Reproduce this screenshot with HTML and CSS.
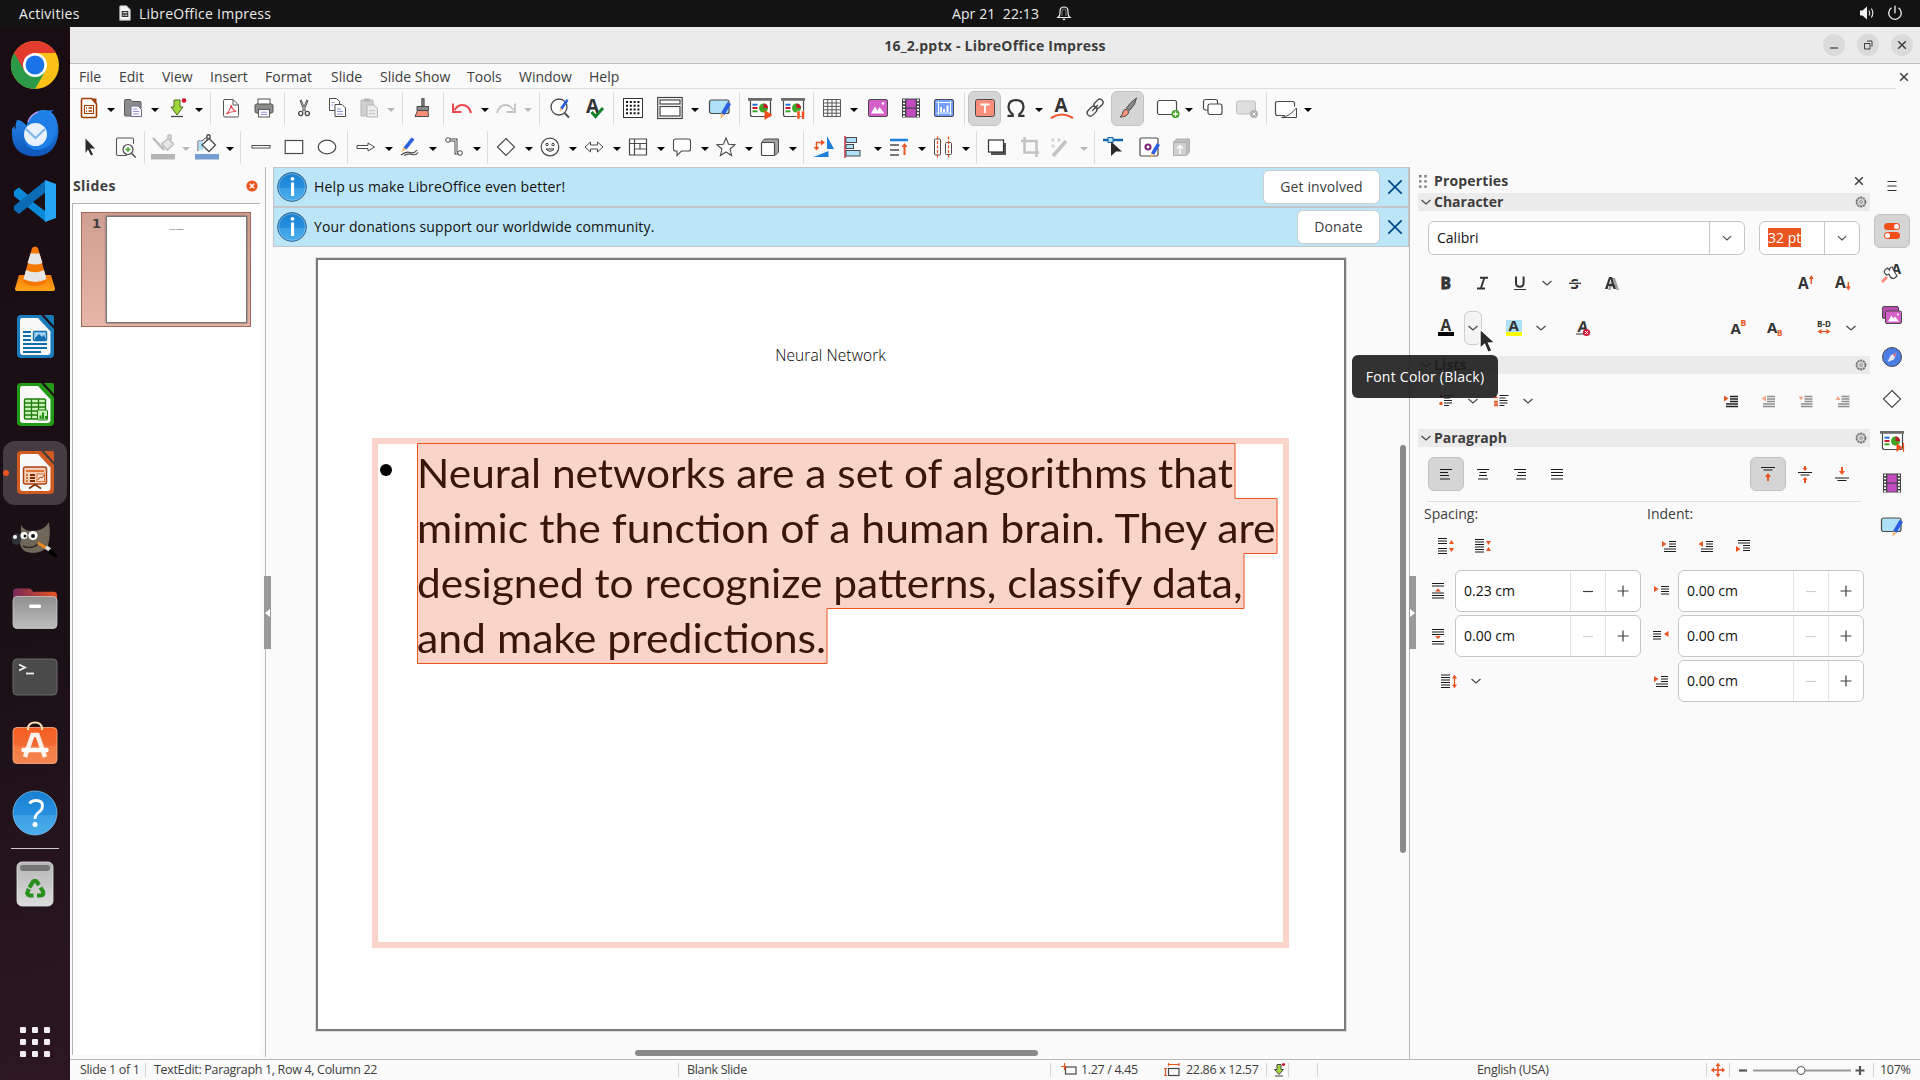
FILE: index.html
```html
<!DOCTYPE html>
<html lang="en">
<head>
<meta charset="utf-8">
<title>16_2.pptx - LibreOffice Impress</title>
<link rel="stylesheet" href="styles.css">
</head>
<body>
<svg class="defs" aria-hidden="true">
  <defs>
    <linearGradient id="gBlue" x1="0" y1="0" x2="0" y2="1"><stop offset="0" stop-color="#1a7fd0"/><stop offset=".54" stop-color="#2590e0"/><stop offset=".55" stop-color="#3c9fe4"/><stop offset="1" stop-color="#4aaeec"/></linearGradient>
    <linearGradient id="gOrange" x1="0" y1="0" x2="0" y2="1"><stop offset="0" stop-color="#f55d22"/><stop offset=".5" stop-color="#f36b33"/><stop offset=".51" stop-color="#f57a43"/><stop offset="1" stop-color="#f58650"/></linearGradient>
    <linearGradient id="gGray" x1="0" y1="0" x2="0" y2="1"><stop offset="0" stop-color="#8f8f8f"/><stop offset="1" stop-color="#bdbdbd"/></linearGradient>
    <linearGradient id="gTrash" x1="0" y1="0" x2="0" y2="1"><stop offset="0" stop-color="#b5b5b5"/><stop offset="1" stop-color="#dcdcdc"/></linearGradient>
    <linearGradient id="gFolder" x1="0" y1="0" x2="1" y2="0"><stop offset="0" stop-color="#77275a"/><stop offset="1" stop-color="#e95420"/></linearGradient>
    <linearGradient id="gCone" x1="0" y1="0" x2="0" y2="1"><stop offset="0" stop-color="#f57900"/><stop offset="1" stop-color="#ffa51c"/></linearGradient>
    <linearGradient id="gBird" x1="0" y1="0" x2="0" y2="1"><stop offset="0" stop-color="#2a8df0"/><stop offset="1" stop-color="#0f55b8"/></linearGradient>
  </defs>
  <symbol id="chev" viewBox="0 0 24 24"><path d="M7.500 10l4.500 4 4.500-4" fill="none" stroke="#4a4a4a" stroke-width="1.300"/></symbol>
  <symbol id="gear" viewBox="0 0 12 12"><circle cx="6" cy="6" r="4.600" fill="#e0e0e0" stroke="#6e6e6e" stroke-width="1.600" stroke-dasharray="2.200 .7"/><circle cx="6" cy="6" r="3.800" fill="#dadada" stroke="#8a8a8a" stroke-width=".7"/><circle cx="6" cy="6" r="1.300" fill="#fafafa" stroke="#6e6e6e" stroke-width=".8"/></symbol>
  <symbol id="minus" viewBox="0 0 24 24"><path d="M7 12.500h10" stroke="currentColor" stroke-width="1.200"/></symbol>
  <symbol id="plus" viewBox="0 0 24 24"><path d="M6.500 12h11M12 6.500v11" stroke="currentColor" stroke-width="1.200"/></symbol>
  <symbol id="cross" viewBox="0 0 12 12"><path d="M2.200 2.200l7.600 7.600M9.800 2.200l-7.600 7.600" stroke="currentColor" stroke-width="1.500"/></symbol>
  <symbol id="info" viewBox="0 0 30 30"><circle cx="15" cy="15" r="14.400" fill="url(#gBlue)" stroke="#35658c" stroke-width="1"/><circle cx="15" cy="15" r="13.300" fill="none" stroke="#8cc7f2" stroke-width=".6"/><circle cx="15.500" cy="6.800" r="1.900" fill="#fff"/><rect x="14" y="10.500" width="3.100" height="13.500" fill="#fff"/></symbol>
  <symbol id="film" viewBox="0 0 24 24"><rect x="3" y="2.500" width="18" height="19" fill="#454545"/><rect x="7.300" y="3.500" width="9.400" height="8" fill="#c24bc0"/><rect x="7.300" y="12.700" width="9.400" height="8" fill="#c24bc0"/><path d="M5 3.500v18M19 3.500v18" stroke="#fff" stroke-width="2" stroke-dasharray="1.600 1.600"/></symbol>
  <symbol id="present" viewBox="0 0 24 24"><path d="M2.500 4.500v14q0 2 2 2H21q1.500 0 1.500-2v-14" fill="#fff" stroke="#4a4a4a" stroke-width="1.200"/><rect x="0" y="2" width="24" height="2.800" fill="#6b6b6b"/><path d="M4.500 8.700h5" stroke="#1c71d8" stroke-width="2"/><path d="M4.500 12h5" stroke="#c9132b" stroke-width="2"/><path d="M4.500 15.300h5" stroke="#3fa524" stroke-width="2"/><circle cx="15.500" cy="12" r="4.500" fill="#3fa524"/><path d="M15.500 12V7.500a4.500 4.500 0 0 1 4.500 4.500z" fill="#c9132b"/></symbol>
  <symbol id="master" viewBox="0 0 24 24"><rect x="1.500" y="4" width="19.500" height="13.500" rx="2" fill="#aee1f7" stroke="#4a4a4a" stroke-width="1.200"/><path d="M19.500 6l3.500 2-6.500 11-3.500-2z" fill="#2b5fe0"/><path d="M13 17l3.500 2-4 4z" fill="#f5b971"/></symbol>
  <symbol id="doc" viewBox="0 0 48 48"><path d="M10 2h20l13 14v25q0 4-4 4H10q-4 0-4-4V6q0-4 4-4z" fill="currentColor"/><path d="M11 5h16l12.500 13.500V39q0 3-3 3H12q-3 0-3-3V8q0-3 2-3z" fill="#f8f8f8"/><path d="M33 2h8q2 0 2 2v9z" fill="currentColor"/></symbol>
</svg>

<header class="topbar">
  <span class="tb-activities">Activities</span>
  <svg class="tb-app" viewBox="0 0 12 16"><path d="M1.500.7h6l3.800 4v10.600H.7V1.500q0-.8.800-.8z" fill="#f4f4f4" stroke="#9a9a9a"/><rect x="2.700" y="6" width="6.600" height="6" fill="#333"/><path d="M3.800 7.700h4.400M3.800 10.200h1.500M6 10.200h2.200" stroke="#f4f4f4"/></svg>
  <span class="tb-name">LibreOffice Impress</span>
  <span class="tb-clock">Apr 21&nbsp; 22:13</span>
  <svg class="tb-bell" viewBox="0 0 14 16"><path d="M1 12.500q2-1.500 2-4.500V6q0-4 4-4t4 4v2q0 3 2 4.500z" fill="none" stroke="#eee" stroke-width="1.200"/><path d="M5 11V6.500Q5 4 7 4t2 2.500V11" fill="none" stroke="#999" stroke-width=".8"/><path d="M5 13.800h4L7 15.500z" fill="#eee"/></svg>
  <svg class="tb-vol" viewBox="0 0 16 16"><path d="M1 5.500h2.500L8 1.500v13L3.500 10.500H1z" fill="#f2f2f2"/><path d="M10 5.500q1.600 2.500 0 5M12.300 3.500q3 4.500 0 9" fill="none" stroke="#e0e0e0" stroke-width="1.200"/></svg>
  <svg class="tb-pow" viewBox="0 0 16 16"><path d="M4.500 2.800a6.300 6.300 0 1 0 7 0M8 .8v7.500" fill="none" stroke="#f2f2f2" stroke-width="1.300"/></svg>
</header>

<div class="desktop">
<nav class="dock">
  <div class="app"><svg viewBox="0 0 48 48"><circle cx="24" cy="24" r="24" fill="#fbc116"/><path d="M24 24L3.200 12A24 24 0 0 0 24 48l10.400-18z" fill="#2a9a48"/><path d="M3.200 12A24 24 0 0 1 44.800 12H24L13.600 30z" fill="#e33b2e"/><circle cx="24" cy="24" r="12" fill="#fff"/><circle cx="24" cy="24" r="9.400" fill="#1a73e8"/></svg></div>
  <div class="app"><svg viewBox="0 0 48 48"><path d="M1 20Q-1 46 23 47.500 46 47 47.500 22 47 8 40 3q-3-2.500-9-2-8 1-12 9l-3 7Q10 10 6 11q-2 4-1 10l-2-4z" fill="url(#gBird)"/><path d="M16 15q5-13 18-13l9-1-6 4q11 9 7 22-5 14-20 14-10-2-11-13z" fill="#1f7fe8"/><circle cx="24.500" cy="25.500" r="11.500" fill="#e9f2fc"/><path d="M15 20l9.500 9 9.500-9" fill="none" stroke="#7db4ea" stroke-width="2"/><path d="M17 13q3-8 10-10" stroke="#b99cf0" stroke-width="1.500" fill="none"/></svg></div>
  <div class="app"><svg viewBox="0 0 48 48"><path d="M3 14l5-3.500L35 33v12L3 19z" fill="#0a8ad8"/><path d="M3 33l5 4L35 15V3L3 29z" fill="#0a6cb4"/><path d="M34 3l11 4v34l-11 4z" fill="#27a5f5"/><path d="M34 16L22 25l12 9z" fill="#1c1015"/></svg></div>
  <div class="app"><svg viewBox="0 0 48 48"><path d="M8 30h32l4 13.500q0 2.500-2 2.500H6q-2 0-2-2.500z" fill="url(#gCone)"/><path d="M21 3q3-3 6 0l9 33q-3 5-12 5t-12-5z" fill="#f57900"/><path d="M19.500 8.500h9l3 9.500q-7 3-15 0zM15 25q9 4.500 18 0l2.500 9q-11 6-23 0z" fill="#e6e6e6"/></svg></div>
  <div class="app writer"><svg viewBox="0 0 48 48"><use href="#doc"/><path d="M12 19h8M12 23h8M12 27h8M12 31h24M12 35h24M12 39h18" stroke="#0f6fae" stroke-width="2.200"/><rect x="22.500" y="18.500" width="13" height="9" rx="1" fill="#9fd0f0" stroke="#0f6fae" stroke-width="1.400"/><path d="M24 27v-2l4-4 3 3 2-2 2 5z" fill="#0f6fae"/></svg></div>
  <div class="app calc"><svg viewBox="0 0 48 48"><use href="#doc"/><rect x="13.500" y="18" width="21" height="20" rx="1" fill="#c9f3b6" stroke="#1e7c0e" stroke-width="1.400"/><path d="M13 22h22M13 26h22M13 30h22M13 34h22M20.500 18v20M27.500 18v20" stroke="#1e7c0e" stroke-width="1.300"/><rect x="26.500" y="29" width="10" height="10" rx="1" fill="#c9f3b6" stroke="#1e7c0e"/><path d="M28.500 38v-3.500h2V38zM31 38v-6.500h2V38zM34 38v-3h2v3z" fill="#1e9010"/></svg></div>
  <div class="app impress active"><i class="running"></i><svg viewBox="0 0 48 48"><use href="#doc"/><rect x="12.500" y="18" width="23" height="17" rx="2" fill="#f6cdb8" stroke="#a84313" stroke-width="1.500"/><path d="M15 22h18" stroke="#e07232" stroke-width="2"/><path d="M15 26h2M15 29h2M15 32h2" stroke="#e07232" stroke-width="2"/><path d="M19 26h5M19 29h5M19 32h5" stroke="#7c2d05" stroke-width="2"/><rect x="26" y="25" width="7.500" height="7.500" fill="#fbe6db" stroke="#e07232"/><path d="M27 31l2-3 2 1 2-3" stroke="#a84313" fill="none"/><path d="M18 39.500l6-4 6 4" fill="none" stroke="#7c2d05" stroke-width="1.600"/></svg></div>
  <div class="app"><svg viewBox="0 0 48 48"><path d="M10 8q3 6 11 6 12 0 17-9 2 14-1 23-4 8-16 8Q9 35 9 25q1-8 1-17z" fill="#6f6759"/><ellipse cx="5.500" cy="22" rx="4.600" ry="6" fill="#2e3338"/><circle cx="4" cy="20" r="2" fill="#fff"/><circle cx="22" cy="18.500" r="4.600" fill="#fff"/><circle cx="13" cy="18.500" r="3.500" fill="#fff"/><circle cx="22" cy="19" r="2" fill="#111"/><circle cx="14" cy="19" r="1.500" fill="#111"/><path d="M12 29q8 4 15-2" fill="none" stroke="#2b2620" stroke-width="1.500"/><path d="M27 26l10 6" stroke="#e88b1c" stroke-width="3"/><path d="M35 30l4 3" stroke="#ddd" stroke-width="4"/><path d="M39 32q6 3 8 9-7-1-10-6z" fill="#000"/></svg></div>
  <div class="app"><svg viewBox="0 0 48 48"><path d="M2 14V7q0-3.500 3.500-3.500H18q2 0 3 2t3 1.300h18.500Q46 7 46 10v8H2z" fill="url(#gFolder)"/><rect x="2" y="11.500" width="44" height="32" rx="4" fill="url(#gGray)" stroke="#c9c9c9" stroke-width=".8"/><rect x="18" y="19.500" width="12" height="3.500" rx="1.500" fill="#fff"/></svg></div>
  <div class="app"><svg viewBox="0 0 48 48"><rect x="2" y="6" width="44" height="36" rx="4" fill="#4a4a4a" stroke="#6a6a6a"/><path d="M8 11.500l6 3-6 3" fill="none" stroke="#f0f0f0" stroke-width="1.800"/><path d="M15 20.500h8" stroke="#f0f0f0" stroke-width="1.800"/></svg></div>
  <div class="app"><svg viewBox="0 0 48 48"><rect x="2" y="6.500" width="44" height="36" rx="4" fill="url(#gOrange)" stroke="#ffb18c" stroke-width=".8"/><path d="M17 9V8q0-6.500 7-6.500t7 6.500v1" fill="none" stroke="#fbe0b4" stroke-width="2"/><path d="M14 36l7.500-22h5L34 36" fill="none" stroke="#fdf0ea" stroke-width="4.500"/><path d="M12.500 29h23" stroke="#fff" stroke-width="4.500" stroke-linecap="round"/></svg></div>
  <div class="app"><svg viewBox="0 0 48 48"><circle cx="24" cy="24" r="22" fill="url(#gBlue)" stroke="#7cc1f0" stroke-width=".8"/><path d="M18.500 14.500Q20.500 11.500 25 11.500q6.500 0 6.500 5.500 0 3.500-3.500 6-4 3-4 7" fill="none" stroke="#fff" stroke-width="2.800"/><circle cx="24" cy="35.500" r="2.500" fill="#fff"/></svg></div>
  <hr class="dock-line">
  <div class="app"><svg viewBox="0 0 48 48"><rect x="6" y="2" width="36" height="44" rx="5" fill="url(#gTrash)" stroke="#e6e6e6" stroke-width=".8"/><rect x="9" y="5" width="30" height="6" rx="3" fill="#767676"/><g fill="none" stroke="#26901c" stroke-width="4.200"><path d="M18.500 27.500l3.300-5.500q2.200-2.500 4.200 0l2 3"/><path d="M29.500 27.500l2.500 4q1 3.500-2 4h-4"/><path d="M22.500 35.500H19q-4-1-2-4.500l1-2"/></g></svg></div>
  <svg class="grid-apps" viewBox="0 0 30 30"><g fill="#f2eff0"><rect width="6" height="6" rx="1"/><rect x="12" width="6" height="6" rx="1"/><rect x="24" width="6" height="6" rx="1"/><rect y="12" width="6" height="6" rx="1"/><rect x="12" y="12" width="6" height="6" rx="1"/><rect x="24" y="12" width="6" height="6" rx="1"/><rect y="24" width="6" height="6" rx="1"/><rect x="12" y="24" width="6" height="6" rx="1"/><rect x="24" y="24" width="6" height="6" rx="1"/></g></svg>
</nav>

<main class="window">
  <div class="titlebar">
    <h1>16_2.pptx - LibreOffice Impress</h1>
    <div class="winbtns">
      <b><svg viewBox="0 0 22 22"><path d="M7 14h8" stroke="#3d3d3d" stroke-width="1.200"/></svg></b>
      <b><svg viewBox="0 0 22 22"><path d="M7.500 9.500h5.500V15H7.500zM10 7h5v5.500" fill="none" stroke="#3d3d3d"/></svg></b>
      <b><svg viewBox="0 0 22 22"><path d="M7.200 7.200l7.600 7.600M14.800 7.200l-7.600 7.600" stroke="#3d3d3d" stroke-width="1.500"/></svg></b>
    </div>
  </div>
  <div class="menubar">
    <span>File</span><span>Edit</span><span>View</span><span>Insert</span><span>Format</span><span>Slide</span><span>Slide Show</span><span>Tools</span><span>Window</span><span>Help</span>
    <svg class="docclose" viewBox="0 0 12 12"><use href="#cross"/></svg>
  </div>

  <div class="toolbar standard">
    <svg viewBox="0 0 24 24"><path d="M6 2.500h8.500L19.500 8v12q0 1.500-1.500 1.500H6q-1.500 0-1.500-1.500V4Q4.500 2.500 6 2.500z" fill="#fff" stroke="#a33e03" stroke-width="1.600"/><path d="M14.500 2.500h5V8z" fill="#a33e03"/><rect x="7.500" y="9.500" width="9" height="8" fill="#fff" stroke="#a33e03" stroke-width="1.100"/><path d="M9 12h1M11.500 12H15M9 15h1M11.500 15H15" stroke="#a33e03" stroke-width="1.300"/></svg>
    <i class="dd"></i>
    <svg viewBox="0 0 24 24"><path d="M3.500 19V4.500q0-1 1-1h5l1.500 2h8q1 0 1 1V19q0 1-1 1H4.500q-1 0-1-1z" fill="#8b8b8b" stroke="#5b5b5b"/><path d="M10 10h7l3.500 3.500v7H10z" fill="#fff" stroke="#6b6b8b"/><path d="M12 13h4M12 15.500h6M12 18h6" stroke="#8f91e0"/></svg>
    <i class="dd"></i>
    <svg viewBox="0 0 24 24"><path d="M9 4h6v7h3l-6 8-6-8h3z" fill="#a3d53f" stroke="#4c6b1c"/><path d="M6 20.500h12" stroke="#444" stroke-width="1.300"/><circle cx="19" cy="4.500" r="2.300" fill="#d4122c"/></svg>
    <i class="dd"></i><i class="sep"></i>
    <svg viewBox="0 0 24 24"><path d="M5 3.500h9L19.500 9v10.500q0 1.500-1.500 1.500H6q-1.500 0-1.500-1.500V5z" fill="#fff" stroke="#555"/><path d="M14 3.500V9h5.500" fill="none" stroke="#555"/><path d="M7.500 18q4-4 4.500-9 1.500 5 5 6.500-5-.5-9.500 2.500z" fill="none" stroke="#ec4050" stroke-width="1.100"/></svg>
    <svg viewBox="0 0 24 24"><rect x="6" y="3" width="12" height="6" fill="#fff" stroke="#555"/><rect x="3" y="8" width="18" height="9" rx="1.500" fill="#8b8b8b" stroke="#555"/><rect x="6.500" y="13.500" width="11" height="7.500" fill="#fff" stroke="#555"/><path d="M8.500 16.200h7M8.500 18.500h7" stroke="#8f91e0"/></svg>
    <i class="sep"></i>
    <svg viewBox="0 0 24 24"><g fill="none" stroke="#4a4a4a"><path d="M8.500 4l4.500 11M15.500 4L11 15" stroke-width="2.200"/><path d="M8.800 4.500l4.400 10.500M15.200 4.500L10.800 15" stroke="#ccc" stroke-width=".7"/><circle cx="8.700" cy="17.500" r="2.100" stroke-width="1.300"/><circle cx="15.300" cy="17.500" r="2.100" stroke-width="1.300"/></g></svg>
    <svg viewBox="0 0 24 24"><g fill="#fff" stroke="#4a4a4a"><path d="M4.500 2.500h7l3 3v9h-10z"/><path d="M10 8.500h7l3.500 3.500v8.500H10z"/></g><path d="M6.500 6.500h3M6.500 9h2M12 13h4M12 15.500h6M12 18h6" stroke="#8f91e0"/></svg>
    <svg viewBox="0 0 24 24"><path d="M4 4h12v16H4z" fill="#cfcfcf" stroke="#b5b5b5"/><rect x="7" y="2.500" width="6" height="3" fill="#b5b5b5"/><path d="M10 9h7l3.500 3.500v8.500H10z" fill="#ececec" stroke="#b5b5b5"/><path d="M12 14.500h6M12 17.500h6" stroke="#c4c4c4"/></svg>
    <i class="dd off"></i><i class="sep"></i>
    <svg viewBox="0 0 24 24"><path d="M9.700 2.500h2.500v8H9.700z" fill="#7a7a7a" stroke="#4a4a4a" stroke-width=".8"/><path d="M5 10.500h11.500v4H5z" fill="#8b8b8b" stroke="#4a4a4a"/><path d="M5.500 14.500h10.500l.5 6H3z" fill="#fa8f79" stroke="#4a4a4a"/></svg>
    <i class="sep"></i>
    <svg viewBox="0 0 24 24"><path d="M21 17q-2-8-9-8-4 0-7.500 5" fill="none" stroke="#ee4652" stroke-width="2.200"/><path d="M3 7.500V16h8.500" fill="none" stroke="#ee4652" stroke-width="2"/></svg>
    <i class="dd"></i>
    <svg viewBox="0 0 24 24"><path d="M3 17q2-8 9-8 4 0 7.500 5" fill="none" stroke="#c3c3c3" stroke-width="1.800"/><path d="M21 7.500V16h-8.500" fill="none" stroke="#c3c3c3" stroke-width="1.800"/></svg>
    <i class="dd off"></i><i class="sep"></i>
    <svg viewBox="0 0 24 24"><circle cx="11" cy="11" r="8" fill="#fff" stroke="#4a4a4a" stroke-width="1.300"/><path d="M16.500 17l4.500 4.500" stroke="#4a4a4a" stroke-width="1.800"/><path d="M18.500 3l2 1.500-6 9-2.500-1.500z" fill="#2b5fe0"/><path d="M12 12l2.500 1.500-3 2.500z" fill="#f5b971"/></svg>
    <svg viewBox="0 0 24 24"><text x="3" y="17" class="ib" font-size="19">A</text><path d="M8.500 16l4 4.500L20 12" fill="none" stroke="#17802b" stroke-width="3"/></svg>
    <i class="sep"></i>
    <svg viewBox="0 0 24 24"><rect x="2.500" y="2.500" width="19" height="19" fill="#fff" stroke="#333"/><path d="M5 6h15M5 9.700h15M5 13.400h15M5 17.200h15" stroke="#111" stroke-width="2" stroke-dasharray="2 1.800"/></svg>
    <svg viewBox="0 0 26 24" class="w26"><g fill="#fff" stroke="#444" stroke-width="1.200"><rect x=".7" y="1.500" width="24.500" height="21"/><rect x="3" y="4" width="20" height="4"/><rect x="3" y="10.500" width="20" height="9.500"/></g></svg>
    <i class="dd"></i>
    <svg><use href="#master"/></svg>
    <i class="sep"></i>
    <svg viewBox="0 0 24 24"><use href="#present"/><path d="M16.500 14l8 5-8 5z" fill="#f04e1b"/></svg>
    <svg viewBox="0 0 24 24"><use href="#present"/><path d="M16 15h3v8h-3zM20.500 15h3v8h-3z" fill="#f04e1b" stroke="#fff" stroke-width=".5"/></svg>
    <i class="sep"></i>
    <svg viewBox="0 0 24 24"><path d="M3.500 3.500h17v17h-17zM3.500 7h17M3.500 10.400h17M3.500 13.800h17M3.500 17.200h17M7.700 3.500v17M12 3.500v17M16.200 3.500v17" fill="none" stroke="#5a5a5a"/></svg>
    <i class="dd"></i>
    <svg viewBox="0 0 24 24"><rect x="2.500" y="3.500" width="19" height="17" rx="1.500" fill="#d55fc8" stroke="#4a4a4a"/><path d="M5 17.500l4-7 2.500 4L13.500 11l5 6.500z" fill="#fff"/><circle cx="17" cy="7.500" r="1.300" fill="#fff"/></svg>
    <svg><use href="#film"/></svg>
    <svg viewBox="0 0 24 24"><rect x="2.500" y="3.500" width="19" height="17" rx="1.500" fill="#739ffb" stroke="#4a4a4a"/><path d="M6.500 5v14M4.500 17h15M4.500 6.500h15M18.500 5v14" stroke="#fff"/><path d="M9 16v-5M12 16v-3M15.500 16V9.500" stroke="#fff" stroke-width="2"/></svg>
    <i class="sep"></i>
    <button class="on w33"><svg viewBox="0 0 24 24"><rect x="2.500" y="3.500" width="19" height="17" rx="2" fill="#fb8f7b" stroke="#4a4a4a"/><path d="M7.500 8.500h9M12 8.500v8.500" stroke="#fff" stroke-width="1.800"/></svg></button>
    <svg viewBox="0 0 24 24"><path d="M3.500 19.800h5.200v-1.500Q4.500 15 4.500 10.500 5 4.200 12 4.200t7.500 6.300q0 4.500-4.200 7.800v1.500h5.200" fill="none" stroke="#333" stroke-width="2.200"/></svg>
    <i class="dd"></i>
    <svg viewBox="0 0 24 24"><text x="4.500" y="16" class="ib" font-size="19">A</text><path d="M1 22q11-7 22 0" fill="none" stroke="#f0572a" stroke-width="2.200"/></svg>
    <svg viewBox="0 0 24 24"><g fill="none" stroke="#4a4a4a" stroke-width="1.300"><rect x="10.500" y="4.500" width="10" height="6.500" rx="3.200" transform="rotate(-45 15.500 7.700)"/><rect x="3.500" y="12" width="11" height="6.500" rx="3.200" transform="rotate(-45 9 15.200)"/><path d="M9 15l6-6"/></g></svg>
    <button class="on w33"><svg viewBox="0 0 24 24"><path d="M20.500 2q-6 4-10 10l3 2.500Q20 8 20.500 2z" fill="#8b8b8b" stroke="#4a4a4a"/><path d="M10 13l3 2.500Q12 21 4 21q2.500-2 3-5 1-3 3-3z" fill="#fb8f7b" stroke="#4a4a4a"/></svg></button>
    <svg viewBox="0 0 24 24"><rect x="2.500" y="4.500" width="19" height="14" rx="2" fill="#fff" stroke="#4a4a4a" stroke-width="1.200"/><circle cx="20.500" cy="18" r="4" fill="#43a525"/><path d="M18 18h5M20.500 15.500v5" stroke="#fff" stroke-width="1.300"/></svg>
    <i class="dd"></i>
    <svg viewBox="0 0 24 24"><g fill="#fff" stroke="#4a4a4a" stroke-width="1.200"><rect x="2.500" y="3.500" width="14" height="10.500" rx="2"/><rect x="7" y="8" width="14" height="10.500" rx="2"/></g></svg>
    <svg viewBox="0 0 24 24"><rect x="2.500" y="5" width="19" height="13" rx="2" fill="#dedede" stroke="#c0c0c0"/><circle cx="20" cy="18" r="4" fill="#b0b0b0"/><path d="M18.500 16.500l3 3M21.500 16.500l-3 3" stroke="#fff"/></svg>
    <i class="sep"></i>
    <svg viewBox="0 0 24 24"><path d="M12 19.500H4.500q-2 0-2-2V7.500q0-2 2-2h15q2 0 2 2v3" fill="#fff" stroke="#4a4a4a" stroke-width="1.200"/><path d="M23.500 12v9.500H8.500q8-1 15-9.500z" fill="#fff" stroke="#4a4a4a"/></svg>
    <i class="dd"></i>
  </div>

  <div class="toolbar drawing">
    <svg viewBox="0 0 24 24"><path d="M8.500 3.500l9.500 10h-5l3 6-2 1-3-6-2.500 3.500z" fill="#2b2b2b"/></svg>
    <svg viewBox="0 0 24 24"><path d="M14 20.500H5q-1.500 0-1.500-1.500V4.500Q3.500 3 5 3h14q1.500 0 1.500 1.500V9" fill="none" stroke="#555" stroke-width="1.100"/><circle cx="15" cy="14.500" r="5" fill="#fff" stroke="#4a4a4a" stroke-width="1.200"/><path d="M18.700 18.500l4 4" stroke="#4a4a4a" stroke-width="1.500"/><path d="M12.500 14.500h5M15 12v5" stroke="#3fa524" stroke-width="1.300"/></svg>
    <i class="sep"></i>
    <svg viewBox="0 0 24 26" class="h26"><path d="M2 4l11 12" fill="none" stroke="#bdbdbd" stroke-width="2.500"/><path d="M11 9.500l6-5 5.500 5.500-6 6-5-5zM17 5V1.500q1.500-1.500 3 0V6" fill="#e6e6e6" stroke="#bdbdbd" stroke-width="1.600"/><rect x="0" y="20" width="24" height="5.500" fill="#b5b5b5"/></svg>
    <i class="dd off"></i>
    <svg viewBox="0 0 24 26" class="h26"><path d="M3 17V7h4l6-5" fill="none" stroke="#4a4a4a"/><rect x="3.500" y="7" width="4.500" height="9" fill="#aee1f7"/><path d="M7 11l7-6.500 6.500 6.500-6.500 6.500zM12 7V1.500q1.500-1.500 3 0V6" fill="#fff" stroke="#4a4a4a" stroke-width="1.300"/><rect x="0" y="20" width="24" height="5.500" fill="#729fcf"/></svg>
    <i class="dd"></i><i class="sep"></i>
    <svg viewBox="0 0 24 24"><rect x="3" y="10.500" width="18" height="2.500" fill="#fff" stroke="#4a4a4a"/></svg>
    <svg viewBox="0 0 24 24"><rect x="3.200" y="5.500" width="17.500" height="13" fill="#fff" stroke="#4a4a4a" stroke-width="1.200"/></svg>
    <svg viewBox="0 0 24 24"><ellipse cx="12" cy="12" rx="8.800" ry="6.800" fill="#fff" stroke="#4a4a4a" stroke-width="1.200"/></svg>
    <i class="sep"></i>
    <svg viewBox="0 0 24 24"><path d="M3 10.500h11V8l6.500 4-6.500 4v-2.500H3z" fill="#fff" stroke="#4a4a4a"/></svg>
    <i class="dd"></i>
    <svg viewBox="0 0 24 24"><path d="M13.500 2.500l3 2-8 10-3-2z" fill="#2b5fe0"/><path d="M5.500 12.500l3 2L3 17z" fill="#f5b971"/><path d="M3 20q5-4 9-2.500t7-2.500M6 20.500q5-2.500 8-1 4 1 6-2" fill="none" stroke="#4a4a4a" stroke-width="1.200"/></svg>
    <i class="dd"></i>
    <svg viewBox="0 0 24 24"><path d="M7 5h7v13h3" fill="none" stroke="#4a4a4a" stroke-width="3"/><path d="M7 5h7v13h3" fill="none" stroke="#fff" stroke-width="1"/><circle cx="6" cy="5" r="2.300" fill="#fff" stroke="#4a4a4a"/><circle cx="18" cy="18" r="2.300" fill="#fff" stroke="#4a4a4a"/></svg>
    <i class="dd"></i><i class="sep"></i>
    <svg viewBox="0 0 24 24"><path d="M12 3.500l8.500 8.500-8.500 8.500L3.500 12z" fill="#fff" stroke="#4a4a4a" stroke-width="1.200"/></svg>
    <i class="dd"></i>
    <svg viewBox="0 0 24 24"><circle cx="12" cy="12" r="8.800" fill="#fff" stroke="#4a4a4a" stroke-width="1.200"/><circle cx="9" cy="9.500" r="1.200" fill="none" stroke="#333"/><circle cx="15" cy="9.500" r="1.200" fill="none" stroke="#333"/><path d="M8 14q4 4.500 8 0z" fill="#fff" stroke="#333"/></svg>
    <i class="dd"></i>
    <svg viewBox="0 0 24 24"><path d="M3 12l5.500-5v3h7V7l5.500 5-5.500 5v-3h-7v3z" fill="#fff" stroke="#4a4a4a"/></svg>
    <i class="dd"></i>
    <svg viewBox="0 0 24 24"><path d="M3.500 4h17v16h-17zM8.500 4v16M3.500 8.500h17M14 8.500V14H8.500M8.500 14H20" fill="#fff" stroke="#4a4a4a" stroke-width="1.200"/></svg>
    <i class="dd"></i>
    <svg viewBox="0 0 24 24"><path d="M5.500 4h13q2 0 2 2v8q0 2-2 2h-7l-4.500 4.500V16H5.500q-2 0-2-2V6q0-2 2-2z" fill="#fff" stroke="#4a4a4a" stroke-width="1.100"/></svg>
    <i class="dd"></i>
    <svg viewBox="0 0 24 24"><path d="M12 3l2.600 6.200 6.400.5-4.900 4.300 1.500 6.500-5.600-3.500-5.600 3.500 1.500-6.500L3 9.700l6.400-.5z" fill="#fff" stroke="#4a4a4a" stroke-width="1.100"/></svg>
    <i class="dd"></i>
    <svg viewBox="0 0 24 24"><path d="M3.500 7.500l3-3.500h14v13l-3.500 3.500z" fill="#a5a5a5" stroke="#4a4a4a"/><rect x="3.500" y="7.500" width="13" height="13" rx="1" fill="#fff" stroke="#4a4a4a" stroke-width="1.200"/></svg>
    <i class="dd"></i><i class="sep"></i>
    <svg viewBox="0 0 24 24"><path d="M15 1v13h7z" fill="#1c80d6"/><path d="M1.500 22h15v-6z" fill="#1c80d6"/><path d="M4.500 13.500V7.500H10" fill="none" stroke="#e95420" stroke-width="1.500"/><path d="M9 4.500l4 3-4 3zM1.500 12h6l-3 3.500z" fill="#e95420"/></svg>
    <svg viewBox="0 0 24 24"><path d="M2 1v22" stroke="#d4122c" stroke-width="1.300"/><g fill="#aee1f7" stroke="#4a4a4a"><rect x="3" y="2.500" width="10.500" height="5"/><rect x="3" y="9.500" width="7.500" height="4"/><rect x="3" y="15.500" width="14" height="5.500"/></g></svg>
    <i class="dd"></i>
    <svg viewBox="0 0 24 24"><path d="M3 5h18" stroke="#1c80d6" stroke-width="2.500"/><path d="M3 10h9M3 15h9M3 20h9" stroke="#777" stroke-width="2.200"/><path d="M17.500 11v9" stroke="#e95420" stroke-width="2"/><path d="M14.500 12l3-4 3 4z" fill="#e95420"/></svg>
    <i class="dd"></i>
    <svg viewBox="0 0 24 24"><g fill="#fff" stroke="#4a4a4a"><rect x="3.500" y="4" width="6" height="16" rx="1"/><rect x="14.500" y="7.500" width="6" height="12" rx="1"/></g><path d="M6.500 1.500v21M17.500 1.500v21" stroke="#e95420" stroke-width="1.300" stroke-dasharray="3 1.500"/></svg>
    <i class="dd"></i><i class="sep"></i>
    <svg viewBox="0 0 24 24"><rect x="6" y="8" width="15" height="12" fill="#555"/><rect x="3.500" y="5" width="15" height="12" fill="#fff" stroke="#333" stroke-width="1.200"/></svg>
    <svg viewBox="0 0 24 24"><path d="M6.500 2v15.500H21M3 6h15.500V22" fill="none" stroke="#c3c3c3" stroke-width="2.500"/></svg>
    <svg viewBox="0 0 24 24"><path d="M5 21L18 6" stroke="#c3c3c3" stroke-width="3.500"/><path d="M5 3v4M3 5h4M11 3v4M9 5h4M5 9v4M3 11h4" stroke="#cfcfcf" stroke-width="1.200"/></svg>
    <i class="dd off"></i><i class="sep"></i>
    <svg viewBox="0 0 24 24"><path d="M2 5h20" stroke="#1565a8" stroke-width="2.500"/><rect x="7" y="2.500" width="5" height="5" fill="#aee1f7" stroke="#1565a8"/><path d="M10 6.500l11 10h-6l-5 4.500z" fill="#2b2b2b"/></svg>
    <svg viewBox="0 0 24 24"><rect x="3" y="3" width="18" height="18" rx="1.500" fill="#fff" stroke="#4a4a4a" stroke-width="1.200"/><circle cx="11" cy="12" r="2.500" fill="#fff" stroke="#7d2a7d" stroke-width="2.200"/><path d="M20 8l3 2-6 10-3-2z" fill="#2b5fe0"/><path d="M14 18l3 2-3.500 3z" fill="#f5b971"/></svg>
    <svg viewBox="0 0 24 24"><path d="M4.500 7l3-3h13v13l-3 3.500h-13z" fill="#bdbdbd" stroke="#b0b0b0"/><path d="M4.500 7.500h13v13h-13z" fill="#cfcfcf" stroke="#b0b0b0"/><path d="M11 19v-8M8 13.500l3-3 3 3" fill="none" stroke="#fff" stroke-width="1.500"/></svg>
  </div>

  <div class="work">
    <section class="slides">
      <div class="slides-head"><h2>Slides</h2><svg viewBox="0 0 12 12"><circle cx="6" cy="6" r="5.600" fill="#e95420"/><path d="M3.800 3.800l4.400 4.400M8.200 3.800L3.800 8.200" stroke="#fff" stroke-width="1.400"/></svg></div>
      <div class="slides-list"><div class="thumb"><span>1</span><div class="mini"><small>Neural Network</small></div></div></div>
    </section>
    <div class="splitter"><i class="handle left"></i></div>

    <section class="editor">
      <div class="infobars">
        <div class="infobar"><svg><use href="#info"/></svg><p>Help us make LibreOffice even better!</p><button class="b1">Get involved</button><svg class="x" viewBox="0 0 18 18"><path d="M1.500 1.500l15 15M16.500 1.500l-15 15" stroke="#004b8d" stroke-width="2"/></svg></div>
        <div class="infobar"><svg><use href="#info"/></svg><p>Your donations support our worldwide community.</p><button class="b2">Donate</button><svg class="x" viewBox="0 0 18 18"><path d="M1.500 1.500l15 15M16.500 1.500l-15 15" stroke="#004b8d" stroke-width="2"/></svg></div>
      </div>
      <div class="canvas">
        <div class="slide">
          <div class="slide-title">Neural Network</div>
          <div class="textframe">
            <svg class="selection" viewBox="0 0 862 222"><path d="M.5.500h817.500v55h42v55h-33v55h-417v55H.5z" fill="#fad4c8" stroke="#e95420"/></svg>
            <ul><li><span>Neural networks are a set of algorithms that</span><span class="l2">mimic the function of a human brain. They are</span><span>designed to recognize patterns, classify data,</span><span class="l2">and make predictions.</span></li></ul>
          </div>
        </div>
        <div class="vscroll"></div>
      </div>
      <div class="hscroll"></div>
    </section>
    <div class="splitter right"><i class="handle"></i></div>

    <aside class="sidebar">
      <div class="props">
        <div class="props-head"><svg class="grip" viewBox="0 0 9 13"><path d="M1.300 0v13M6.500 0v13" stroke="#777" stroke-width="2.400" stroke-dasharray="2.400 2.800"/></svg><h2>Properties</h2><svg class="close" viewBox="0 0 12 12"><use href="#cross"/></svg></div>
        <h3 class="section"><svg class="c"><use href="#chev"/></svg><span>Character</span><svg class="g"><use href="#gear"/></svg></h3>
        <div class="combos">
          <div class="combo font"><span>Calibri</span><svg><use href="#chev"/></svg></div>
          <div class="combo size"><span><mark>32 pt</mark></span><svg><use href="#chev"/></svg></div>
        </div>
        <div class="row r1">
          <svg viewBox="0 0 24 24"><text x="6.500" y="17.500" class="ib" font-size="15.500" stroke="#333" stroke-width=".9">B</text></svg>
          <svg viewBox="0 0 24 24"><path d="M10 6.700h8M7 17.500h8M14.300 7l-3.500 10.500" stroke="#333" stroke-width="1.900"/></svg>
          <svg viewBox="0 0 24 24"><path d="M9 5.500v6.500q0 3.800 3.800 3.800t3.800-3.800V5.500" fill="none" stroke="#333" stroke-width="2"/><path d="M7 18.500h12" stroke="#333"/></svg>
          <svg><use href="#chev"/></svg>
          <svg viewBox="0 0 24 24"><text x="7.500" y="17.500" class="ib" font-size="15">S</text><path d="M6 12.300h12" stroke="#fafafa" stroke-width="3"/><path d="M6 12.300h12" stroke="#333" stroke-width="1.300"/></svg>
          <svg viewBox="0 0 24 24"><text x="5" y="17.500" class="ib shadowed" font-size="16">A</text></svg>
          <svg viewBox="0 0 24 24"><text x="4" y="18" class="ib" font-size="15.500">A</text><path d="M17.300 6v7" stroke="#e95420" stroke-width="1.400"/><path d="M14.800 8l2.500-4 2.500 4z" fill="#e95420"/></svg>
          <svg viewBox="0 0 24 24"><text x="4" y="17" class="ib" font-size="15.500">A</text><path d="M17.300 11v6" stroke="#e95420" stroke-width="1.400"/><path d="M14.800 15.500l2.500 4 2.500-4z" fill="#e95420"/></svg>
        </div>
        <div class="row r2">
          <svg viewBox="0 0 24 24"><text x="6.500" y="15" class="ib" font-size="15.500">A</text><rect x="4" y="16" width="16" height="4" fill="#000"/></svg>
          <button class="ddbtn"><svg><use href="#chev"/></svg></button>
          <svg viewBox="0 0 24 24"><rect x="4" y="4" width="16" height="12" fill="#aee1f7"/><text x="6.500" y="15" class="ib" font-size="15">A</text><rect x="4" y="16" width="16" height="4" fill="#ff0"/></svg>
          <svg><use href="#chev"/></svg>
          <svg viewBox="0 0 24 24"><text x="8" y="15.500" class="ib" font-size="15" transform="skewX(-6)">A</text><path d="M5 18h8" stroke="#333"/><circle cx="15.500" cy="16.500" r="3.600" fill="#cf1a3a"/><path d="M14 15l3 3M17 15l-3 3" stroke="#fff"/></svg>
          <svg viewBox="0 0 24 24"><text x="3.500" y="18" class="ib" font-size="15">A</text><text x="13.500" y="9.500" class="ir" font-size="8.500">B</text></svg>
          <svg viewBox="0 0 24 24"><text x="4" y="16.500" class="ib" font-size="15">A</text><text x="14" y="20" class="ir" font-size="8">B</text></svg>
          <svg viewBox="0 0 24 24"><text x="5" y="11" class="ib" font-size="8">B-D</text><path d="M8 15.500h8" stroke="#e95420" stroke-width="1.200"/><path d="M5.500 15.500l4-2.500v5zM18.500 15.500l-4-2.500v5z" fill="#e95420"/></svg>
          <svg><use href="#chev"/></svg>
        </div>
        <h3 class="section s2"><svg class="c"><use href="#chev"/></svg><span>Lists</span><svg class="g"><use href="#gear"/></svg></h3>
        <div class="row r3">
          <svg viewBox="0 0 24 24"><circle cx="7" cy="7" r="1.700" fill="#e95420"/><circle cx="7" cy="14.500" r="1.700" fill="#e95420"/><path d="M10 6.500h9M10 9h6M10 11.500h8M10 14h8M10 16.500h5" stroke="#222"/></svg>
          <svg><use href="#chev"/></svg>
          <svg viewBox="0 0 24 24"><path d="M4.500 8.500h4M5 12.500h4M5 16.500h4M6.500 6v2.500M6 13v3.500M8 13v3.500" stroke="#e95420" stroke-width="1.300"/><path d="M10.500 6.500h9M10.500 9h6M10.500 11.500h8M10.500 14h8M10.500 16.500h5" stroke="#222"/></svg>
          <svg><use href="#chev"/></svg>
          <svg viewBox="0 0 24 24"><path d="M5 6.500l4.500 3-4.500 3z" fill="#e95420"/><path d="M11 7.500h8M11 10h8M11 12.500h8M7 15h12M7 17.500h12" stroke="#222" stroke-width="1.300"/></svg>
          <svg class="dim" viewBox="0 0 24 24"><path d="M9 6.500l-4.500 3 4.500 3z" fill="#e95420"/><path d="M10 7.500h8M10 10h8M10 12.500h8M6 15h12M6 17.500h12" stroke="#222" stroke-width="1.300"/></svg>
          <svg class="dim" viewBox="0 0 24 24"><path d="M4.500 7.500h5l-2.500 4z" fill="#e95420"/><path d="M10.500 7.500h8M10.500 10h8M10.500 12.500h8M7 15h11.500M7 17.500h11.500" stroke="#222" stroke-width="1.300"/></svg>
          <svg class="dim" viewBox="0 0 24 24"><path d="M4.500 11h5L7 7z" fill="#e95420"/><path d="M10.500 7.500h8M10.500 10h8M10.500 12.500h8M7 15h11.500M7 17.500h11.500" stroke="#222" stroke-width="1.300"/></svg>
        </div>
        <h3 class="section s3"><svg class="c"><use href="#chev"/></svg><span>Paragraph</span><svg class="g"><use href="#gear"/></svg></h3>
        <div class="row r4">
          <button class="on"><svg viewBox="0 0 24 24"><path d="M6 7.500h12M6 10.500h8M6 13.500h9M6 17h10" stroke="#1a1a1a" stroke-width="1.100"/></svg></button>
          <svg viewBox="0 0 24 24"><path d="M6 7.500h12M8.500 10.500h7M8 13.500h8M7 17h10" stroke="#1a1a1a" stroke-width="1.200"/></svg>
          <svg viewBox="0 0 24 24"><path d="M6 7.500h12M10 10.500h8M9 13.500h9M8 17h10" stroke="#1a1a1a" stroke-width="1.200"/></svg>
          <svg viewBox="0 0 24 24"><path d="M6 7.500h12M6 10.500h12M6 13.500h12M6 17h12" stroke="#1a1a1a" stroke-width="1.200"/></svg>
          <button class="on"><svg viewBox="0 0 24 24"><path d="M5 5.500h14M7.500 8h9" stroke="#1a1a1a" stroke-width="1.200"/><path d="M12 13v6" stroke="#e95420" stroke-width="2"/><path d="M9 15l3-4 3 4z" fill="#e95420"/></svg></button>
          <svg viewBox="0 0 24 24"><path d="M5 10.500h14M7.500 13h9" stroke="#1a1a1a" stroke-width="1.200"/><path d="M12 4v3M12 17v4" stroke="#e95420" stroke-width="2"/><path d="M9.500 6l2.500 3 2.500-3zM9.500 18l2.500-3 2.500 3z" fill="#e95420"/></svg>
          <svg viewBox="0 0 24 24"><path d="M5 16h14M7.500 18.500h9" stroke="#1a1a1a" stroke-width="1.200"/><path d="M12 5v5" stroke="#e95420" stroke-width="2"/><path d="M9 9l3 4 3-4z" fill="#e95420"/></svg>
        </div>
        <div class="labels"><span>Spacing:</span><span>Indent:</span></div>
        <div class="row r5">
          <svg viewBox="0 0 24 24"><path d="M4 4.500h9M4 7h9M4 9.500h9M4 14.500h9M4 17h9M4 19.500h9" stroke="#1a1a1a" stroke-width="1.200"/><path d="M15 10l2.500-4 2.500 4zM15 14l2.500 4 2.500-4z" fill="#e95420"/></svg>
          <svg viewBox="0 0 24 24"><path d="M4 5.500h9M4 8h9M4 10.500h9M4 13h9M4 15.500h9M4 18h9" stroke="#1a1a1a" stroke-width="1.200"/><path d="M15 7l2.500 4 2.500-4zM15 17l2.500-4 2.500 4z" fill="#e95420"/></svg>
          <svg viewBox="0 0 24 24"><path d="M5 7l4.500 3L5 13z" fill="#e95420"/><path d="M12 7.500h7M12 10h7M12 12.500h7M7 15h12M7 17.500h12" stroke="#1a1a1a" stroke-width="1.200"/></svg>
          <svg viewBox="0 0 24 24"><path d="M9 7l-4.500 3L9 13z" fill="#e95420"/><path d="M12 7.500h7M12 10h7M12 12.500h7M7 15h12M7 17.500h12" stroke="#1a1a1a" stroke-width="1.200"/></svg>
          <svg viewBox="0 0 24 24"><path d="M5 12l4.500 3L5 18z" fill="#e95420"/><path d="M7 6.500h12M7 9h12M12 11.500h7M12 14h7M12 16.500h7" stroke="#1a1a1a" stroke-width="1.200"/></svg>
        </div>
        <div class="spins">
          <svg viewBox="0 0 24 24"><path d="M6 4.500h12M6 7h12M6 14h12M6 16.500h12M6 19h12" stroke="#1a1a1a" stroke-width="1.200"/><path d="M9 12.500l3-3 3 3z" fill="#e95420"/></svg>
          <div class="spin"><span>0.23 cm</span><svg><use href="#minus"/></svg><svg><use href="#plus"/></svg></div>
          <svg viewBox="0 0 24 24"><path d="M5 7l4.500 3L5 13z" fill="#e95420"/><path d="M12 7.500h8M12 10h8M12 12.500h8M12 15h8" stroke="#1a1a1a" stroke-width="1.200"/></svg>
          <div class="spin"><span>0.00 cm</span><svg class="no"><use href="#minus"/></svg><svg><use href="#plus"/></svg></div>
          <svg viewBox="0 0 24 24"><path d="M6 5.500h12M6 8h12M6 10.500h12M6 17.500h12M6 20h12" stroke="#1a1a1a" stroke-width="1.200"/><path d="M9 12l3 3 3-3z" fill="#e95420"/></svg>
          <div class="spin"><span>0.00 cm</span><svg class="no"><use href="#minus"/></svg><svg><use href="#plus"/></svg></div>
          <svg viewBox="0 0 24 24"><path d="M19.500 7L15 10l4.500 3z" fill="#e95420"/><path d="M4 7.500h8M4 10h8M4 12.500h8M4 15h8" stroke="#1a1a1a" stroke-width="1.200"/></svg>
          <div class="spin"><span>0.00 cm</span><svg class="no"><use href="#minus"/></svg><svg><use href="#plus"/></svg></div>
          <div class="linesp"><svg viewBox="0 0 24 24"><path d="M4 6h9M4 8.500h9M4 11h9M4 13.500h9M4 16h9M4 18.500h9" stroke="#1a1a1a" stroke-width="1.200"/><path d="M17.500 8v9" stroke="#e95420" stroke-width="1.300"/><path d="M15 9.500l2.500-4 2.500 4zM15 15.500l2.500 4 2.500-4z" fill="#e95420"/></svg><svg><use href="#chev"/></svg></div>
          <svg viewBox="0 0 24 24"><path d="M5 7l4.500 3L5 13z" fill="#e95420"/><path d="M12 7.500h7M12 10h7M12 12.500h7M7 15h12M7 17.500h12" stroke="#1a1a1a" stroke-width="1.200"/></svg>
          <div class="spin"><span>0.00 cm</span><svg class="no"><use href="#minus"/></svg><svg><use href="#plus"/></svg></div>
        </div>
      </div>
      <nav class="tabs">
        <svg class="burger" viewBox="0 0 24 24"><path d="M7.500 7.500h9M7.500 12h9M7.500 16.500h9" stroke="#333" stroke-width="1.200"/></svg>
        <button class="on"><svg viewBox="0 0 24 24"><rect x="4" y="4" width="16" height="7" rx="3.500" fill="#f04e1b"/><circle cx="16.500" cy="7.500" r="2.500" fill="#fff"/><rect x="4" y="13" width="16" height="7" rx="3.500" fill="#f04e1b"/><circle cx="7.500" cy="16.500" r="2.500" fill="#fff"/></svg></button>
        <svg viewBox="0 0 24 24"><text x="11.500" y="13" class="ib" font-size="14">A</text><path d="M2 21l5-5" stroke="#fa8f79" stroke-width="3"/><path d="M4.500 12q-1-3 3-5l2 2q0-3 3-3l1 3 3.500 6-3 2.500q-4 0-5-4.500l-2.500 1z" fill="#fff" stroke="#4a4a4a" stroke-width="1.200"/></svg>
        <svg viewBox="0 0 24 24"><rect x="2.500" y="3.500" width="16" height="12" rx="1.500" fill="#b94bb0" stroke="#4a4a4a"/><rect x="5.500" y="8" width="16" height="12.500" rx="1.500" fill="#d55fc8" stroke="#4a4a4a"/><path d="M8 18.500l3.500-6 2 3 1.500-2 4 5z" fill="#fff"/><circle cx="18" cy="11.500" r="1" fill="#fff"/></svg>
        <svg viewBox="0 0 24 24"><circle cx="12" cy="12" r="9.500" fill="#4a7de6" stroke="#4a4a4a"/><path d="M16.500 7.500l-2.500 7-6.500 2.500 3-6.500z" fill="#e6e6f0"/><path d="M16.500 7.500l-2 4-1.500-1.500z" fill="#e0344a"/></svg>
        <svg viewBox="0 0 24 24"><path d="M12 3.500l8.500 8.500-8.500 8.500L3.500 12z" fill="#fff" stroke="#4a4a4a" stroke-width="1.200"/></svg>
        <svg viewBox="0 0 24 24"><use href="#present"/><path d="M16.500 14l6 4.500-6 4.500z" fill="#f04e1b"/><path d="M23.500 14v9" stroke="#f04e1b" stroke-width="1.200"/></svg>
        <svg><use href="#film"/></svg>
        <svg class="last"><use href="#master"/></svg>
      </nav>
    </aside>
  </div>

  <footer class="status">
    <span>Slide 1 of 1</span><i></i><span>TextEdit: Paragraph 1, Row 4, Column 22</span><i></i><span>Blank Slide</span><i></i>
    <svg viewBox="0 0 16 16"><rect x="3.500" y="5" width="10.500" height="7" fill="none" stroke="#4a4a4a" stroke-width="1.200"/><path d="M-1 4.500h6M2.500 1v7" stroke="#e95420" stroke-width="1.200"/></svg><span>1.27 / 4.45</span>
    <svg viewBox="0 0 16 16"><rect x="3.500" y="6.500" width="10.500" height="7" fill="none" stroke="#4a4a4a" stroke-width="1.200"/><path d="M3 2.500h11.500M3.500 1v3M14 1v3M.5 6.500v7M-1 6.500h3M-1 13.500h3" stroke="#e95420" stroke-width="1.200"/></svg><span>22.86 x 12.57</span><i></i>
    <svg viewBox="0 0 16 16"><path d="M5 2.500h4v5h2.500L7 12.500 2.500 7.500H5z" fill="#a3d53f" stroke="#4a4a4a"/><path d="M3 14h8" stroke="#444"/><circle cx="11.500" cy="2.500" r="1.600" fill="#d4122c"/></svg><i></i><i></i>
    <span>English (USA)</span><i></i>
    <svg viewBox="0 0 16 16"><path d="M8 3v10M3 8h10" stroke="#e95420" stroke-width="1.500"/><path d="M5.500 4L8 .8 10.500 4zM5.500 12L8 15.200l2.500-3.200zM4 5.500L.8 8 4 10.500zM12 5.500L15.200 8 12 10.500z" fill="#e95420"/></svg><i></i>
    <svg viewBox="0 0 10 16"><path d="M1 8.500h8" stroke="#555" stroke-width="2.200"/></svg>
    <svg class="zoomer" viewBox="0 0 98 16"><path d="M0 8.500h98" stroke="#999" stroke-width="1.800"/><circle cx="48" cy="8.500" r="4" fill="#fff" stroke="#555"/></svg>
    <svg viewBox="0 0 10 16"><path d="M.5 8.500h9M5 4v9" stroke="#555" stroke-width="2.200"/></svg><i></i>
    <span>107%</span>
  </footer>
</main>
</div>

<div class="tooltip">Font Color (Black)</div>
<svg class="cursor" viewBox="0 0 18 26"><path d="M1 1v19.500l4.600-4 3.400 8 4-1.700-3.400-7.600 6.400-.4z" fill="#2b2b2b" stroke="#fff" stroke-width="1.400"/></svg>
</body>
</html>
```
FILE: styles.css
```css
* { box-sizing: border-box; }
html, body { margin: 0; width: 1920px; height: 1080px; overflow: hidden; }
body {
  font: 14px/18px "Open Sans", "Noto Sans", sans-serif;
  color: #3d3d3d;
  background: #fafafa;
  position: relative;
}
h1, h2, h3, p, ul { margin: 0; padding: 0; font-size: inherit; }
span, p, h1, h2, button { white-space: nowrap; }
svg { display: block; flex: none; width: 24px; height: 24px; overflow: visible; }
button { font: inherit; color: inherit; padding: 0; border: 1px solid #cdcdcd; background: #fff; border-radius: 6px; display: flex; align-items: center; justify-content: center; }
.defs { position: absolute; width: 0; height: 0; }
.ib { font-family: "Open Sans", sans-serif; font-weight: 700; fill: #333; }
.shadowed { filter: drop-shadow(3px 1.5px 0 #a0a0a0); }
.ir { font-family: "Open Sans", sans-serif; font-weight: 700; fill: #e95420; }

/* desktop bar */
.topbar { height: 27px; background: #131313; color: #ececec; display: grid; grid-template-columns: 19px 100px 20px 813px 105px 802px 28px 33px; align-items: center; }
.tb-activities { grid-column: 2; letter-spacing: .3px; }
.tb-app { width: 12px; height: 16px; }
.tb-name { letter-spacing: .25px; }
.tb-clock { letter-spacing: .1px; }
.tb-bell { width: 14px; height: 16px; }
.topbar svg { margin-top: -1px; }
.tb-vol, .tb-pow { width: 16px; height: 16px; }

.desktop { display: flex; height: 1053px; }
.dock { width: 70px; padding-top: 4px; background: linear-gradient(165deg, #190d13 0%, #1c1017 60%, #2c1723 100%); display: flex; flex-direction: column; align-items: center; }
.app { width: 64px; height: 64px; margin: 2px 0; border-radius: 12px; display: flex; align-items: center; justify-content: center; position: relative; }
.app svg { width: 48px; height: 48px; }
.app.active { background: #453b41; }
.writer { color: #1b7ab8; }
.calc { color: #239a16; }
.impress { color: #cf5a22; }
.running { position: absolute; left: 0; top: 29px; width: 6px; height: 6px; border-radius: 3px; background: #e95420; }
.dock-line { width: 48px; height: 1px; border: 0; margin: 1px 0 1px; background: #d0ccce; }
.grid-apps { width: 30px; height: 30px; margin: auto 0 23px; }

.window { flex: 1; display: flex; flex-direction: column; min-width: 0; }
.titlebar { height: 37px; background: #ebebeb; border-bottom: 1px solid #bfbfbf; display: flex; align-items: center; position: relative; padding-top: 2px; }
.titlebar h1 { flex: 1; text-align: center; font-weight: 700; letter-spacing: .23px; }
.winbtns { display: flex; gap: 12px; position: absolute; right: 7px; top: 7px; }
.winbtns b { width: 22px; height: 22px; border-radius: 11px; background: #dadada; }
.winbtns svg { width: 22px; height: 22px; }

.menubar { height: 25px; margin-right: 24px; padding-left: 9px; border-bottom: 1px solid #dcdcdc; display: grid; grid-template-columns: 40px 43px 48px 55px 66px 49px 87px 52px 70px 1309px 12px; align-items: center; padding-top: 1px; }
.docclose { width: 12px; height: 12px; color: #3d3d3d; }

.toolbar { height: 39px; padding: 0 0 1px 7px; display: grid; align-items: center; }
.standard { grid-template-columns: 29px 15px 29px 15px 29px 16px 9px 33px 32px 8px 33px 32px 29px 16px 10px 31px 7px 30px 14px 29px 16px 9px 35px 30px 8px 36px 33px 18px 31px 9px 33px 32px 7px 29px 17px 33px 33px 32px 4px 36px 30px 16px 33px 28px 44px 29px 17px 33px 32px 7px 30px 10px; }
.drawing { grid-template-columns: 36px 31px 7px 30px 14px 30px 15px 9px 33px 33px 32px 7px 30px 14px 30px 14px 30px 15px 7px 30px 14px 30px 14px 30px 14px 30px 14px 30px 14px 30px 14px 30px 15px 9px 31px 30px 14px 30px 14px 30px 15px 9px 33px 30px 31px 15px 7px 36px 32px 24px; }
.dd { width: 0; height: 0; margin: 3px 0 0 1px; border: 4px solid transparent; border-top: 4px solid #000; border-bottom: 0; }
.dd.off { border-top-color: #b8b8b8; }
.sep { width: 1px; height: 33px; background: #dcdcdc; }
.w26 { width: 26px; }
.h26 { height: 26px; }
.on { background: #d5d5d5; border-color: #c2c2c2; }
.standard .on { height: 35px; }
.w33 { width: 33px; }

.work { height: 892px; display: flex; }
.slides { width: 195px; display: flex; flex-direction: column; }
.slides-head { height: 36px; padding: 1px 7px 0 3px; display: flex; justify-content: space-between; align-items: center; }
.slides-head svg { width: 12px; height: 12px; }
.slides-head h2 { font-weight: 700; letter-spacing: .4px; }
.slides-list { width: 188px; margin-left: 2px; flex: 1; margin-bottom: 4px; border: 1px solid #b5b5b5; border-width: 1px 0 0 1px; background: #fff; padding: 8px; }
.thumb { width: 170px; height: 115px; border: 1px solid #a5685a; background: linear-gradient(#cf9f91, #e5b7a9); display: flex; padding: 3px; }
.thumb span { width: 21px; text-align: right; padding-right: 5px; font: 700 13px/16px "DejaVu Sans", sans-serif; }
.mini { width: 141px; height: 107px; background: #fff; border: 1px solid #777; box-shadow: 0 0 2px #555; text-align: center; }
.mini small { display: block; margin-top: 9px; font-size: 2px; line-height: 8px; color: #000; }

.splitter { width: 8px; position: relative; }
.splitter::before { content: ""; position: absolute; left: 0; top: 0; bottom: 2px; width: 1px; background: #b8b8b8; }
.handle { position: absolute; left: -1px; top: 409px; width: 7px; height: 73px; background: #9a9a9a; z-index: 2; }
.handle::after { content: ""; position: absolute; left: 1px; top: 33px; border: 4px solid transparent; border-left: 5px solid #fff; border-right: 0; }
.handle.left::after { border: 4px solid transparent; border-right: 5px solid #fff; border-left: 0; }
.splitter.right { width: 1px; }
.splitter.right .handle { left: 0; }
.splitter.right::before { bottom: 0; }

.editor { width: 1136px; display: flex; flex-direction: column; }
.infobar { height: 40px; background: #bce5f7; border: 1px solid #c3c6c8; display: flex; align-items: center; padding: 0 5px 0 3px; color: #111; }
.infobar svg { width: 30px; height: 30px; }
.infobar p { flex: 1; margin-left: 7px; letter-spacing: .14px; }
.infobar button { height: 34px; color: #3d3d3d; letter-spacing: .1px; }
.infobar .x { width: 16px; height: 16px; margin-left: 7px; }
.b1 { width: 117px; }
.b2 { width: 83px; }
.canvas { height: 800px; padding: 11px 3px 0 43px; display: flex; justify-content: space-between; }
.slide { width: 1030px; height: 773px; background: #fff; border: 2px solid #7c7c7c; outline: 1px solid #dcdcdc; padding: 80px 0 0 54px; }
.slide-title { width: 917px; height: 30px; text-align: center; font: 15.500px/30px "Open Sans", sans-serif; font-weight: 300; color: #000; letter-spacing: .1px; }
.textframe { width: 917px; height: 510px; margin-top: 68px; border: 6px solid #fad4c8; position: relative; }
.selection { position: absolute; left: 39px; top: -1px; width: 862px; height: 222px; }
.textframe ul { position: relative; list-style: none; padding: 0 0 0 39px; font: 41px/55px Lato, "Open Sans", sans-serif; color: #3b140a; }
.textframe li::before { content: ""; position: absolute; left: 2px; top: 20px; width: 12px; height: 12px; border-radius: 6px; background: #000; }
.textframe li span { display: block; width: 800px; height: 55px; padding-top: 1px; transform: scaleX(1.035); transform-origin: 0 0; }
.textframe li .l2 { transform: scaleX(1.0425); }
.vscroll { width: 6px; height: 408px; margin-top: 187px; border-radius: 3px; background: #8a8a8a; }
.hscroll { width: 403px; height: 6px; margin: 3px 0 0 362px; border-radius: 3px; background: #8a8a8a; }

.sidebar { width: 510px; display: flex; }
.props { width: 461px; padding-left: 8px; }
.props-head { height: 26px; display: flex; align-items: center; padding: 2px 6px 0 1px; }
.grip { width: 9px; height: 13px; }
.props-head h2 { flex: 1; margin-left: 6px; font-weight: 700; letter-spacing: .15px; }
.close { width: 12px; height: 12px; }
.section { width: 452px; height: 18px; background: #ebebeb; display: flex; align-items: center; font-weight: 700; }
.section span { flex: 1; margin-left: -4px; line-height: 18px; }
.section .c { width: 24px; margin-left: -4px; }
.section .g { width: 12px; height: 12px; margin-right: 3px; }
.combos { display: flex; gap: 14px; margin: 10px 0 0 10px; }
.combo { height: 34px; border: 1px solid #c6c6c6; border-radius: 6px; background: #fff; display: flex; align-items: center; color: #111; }
.combo span { flex: 1; padding-left: 8px; }
.combo svg { width: 35px; height: 32px; padding: 5px; border-left: 1px solid #c6c6c6; }
.font { width: 317px; }
.size { width: 101px; }
.combo mark { background: #e95420; color: #fff; }
.row { display: grid; align-items: center; height: 34px; padding-left: 16px; }
.r1 { grid-template-columns: 36px 37px 28px 28px 37px 194px 37px 24px; margin-top: 11px; }
.r2 { grid-template-columns: 30px 38px 27px 42px 156px 36px 49px 27px 24px; margin-top: 11px; }
.r3 { grid-template-columns: 27px 28px 27px 203px 38px 37px 37px 24px; margin-top: 10px; }
.r4 { grid-template-columns: 43px 37px 37px 205px 43px 37px 24px; padding-left: 10px; margin-top: 10px; }
.r5 { grid-template-columns: 37px 186px 37px 37px 24px; margin-top: 5px; }
.s2, .s3 { margin-top: 11px; }
.ddbtn { width: 18px; height: 34px; background: #f4f4f4; }
.dim { opacity: .5; }
.row .on { width: 36px; height: 34px; }
.labels { display: grid; grid-template-columns: 223px 100px; border-top: 1px solid #dcdcdc; margin: 10px 10px 0 9px; padding-top: 3px; height: 23px; }
.labels span { margin-left: -3px; }
.spins { display: grid; grid-template-columns: 29px 194px 29px 186px; row-gap: 3px; padding-left: 8px; margin-top: 7px; align-items: center; }
.spin { width: 186px; height: 42px; border: 1px solid #c6c6c6; border-radius: 6px; background: #fff; display: flex; align-items: center; color: #111; }
.spin span { flex: 1; padding-left: 8px; }
.spin svg { width: 35px; height: 40px; padding: 8px 5px; border-left: 1px solid #e4e4e4; color: #3d3d3d; }
.spin .no { color: #cfcfcf; }
.linesp { grid-column: span 2; padding-left: 11px; display: flex; gap: 3px; }
.tabs { width: 48px; display: flex; flex-direction: column; align-items: center; padding: 7px 7px 0 0; }
.tabs > svg { margin-bottom: 18px; }
.tabs .burger { margin-bottom: 16px; }
.tabs .on { width: 36px; height: 34px; margin-bottom: 13px; }
.tabs .last { margin-top: 1px; }

.status { height: 21px; border-top: 1px solid #b9b9b9; display: grid; align-items: center; padding: 0 0 0 10px; font-size: 12.500px; letter-spacing: -.33px;
  grid-template-columns: 65px 9px 524px 9px 363px 12px 19px 84px 21px 80px 6px 16px 29px 160px 229px 4px 19px 9px 15px 102px 18px 7px 40px; }
.status i { width: 1px; height: 14px; background: #d5d5d5; }
.status svg { width: 16px; height: 16px; }
.status svg[viewBox="0 0 10 16"] { width: 10px; }
.status .zoomer { width: 98px; }

.tooltip { position: absolute; left: 1352px; top: 355px; width: 146px; height: 43px; border-radius: 6px; background: rgba(28, 28, 28, .9); color: #fff; text-align: center; line-height: 43px; letter-spacing: .25px; }
.cursor { position: absolute; left: 1479px; top: 328px; width: 18px; height: 26px; }
```
